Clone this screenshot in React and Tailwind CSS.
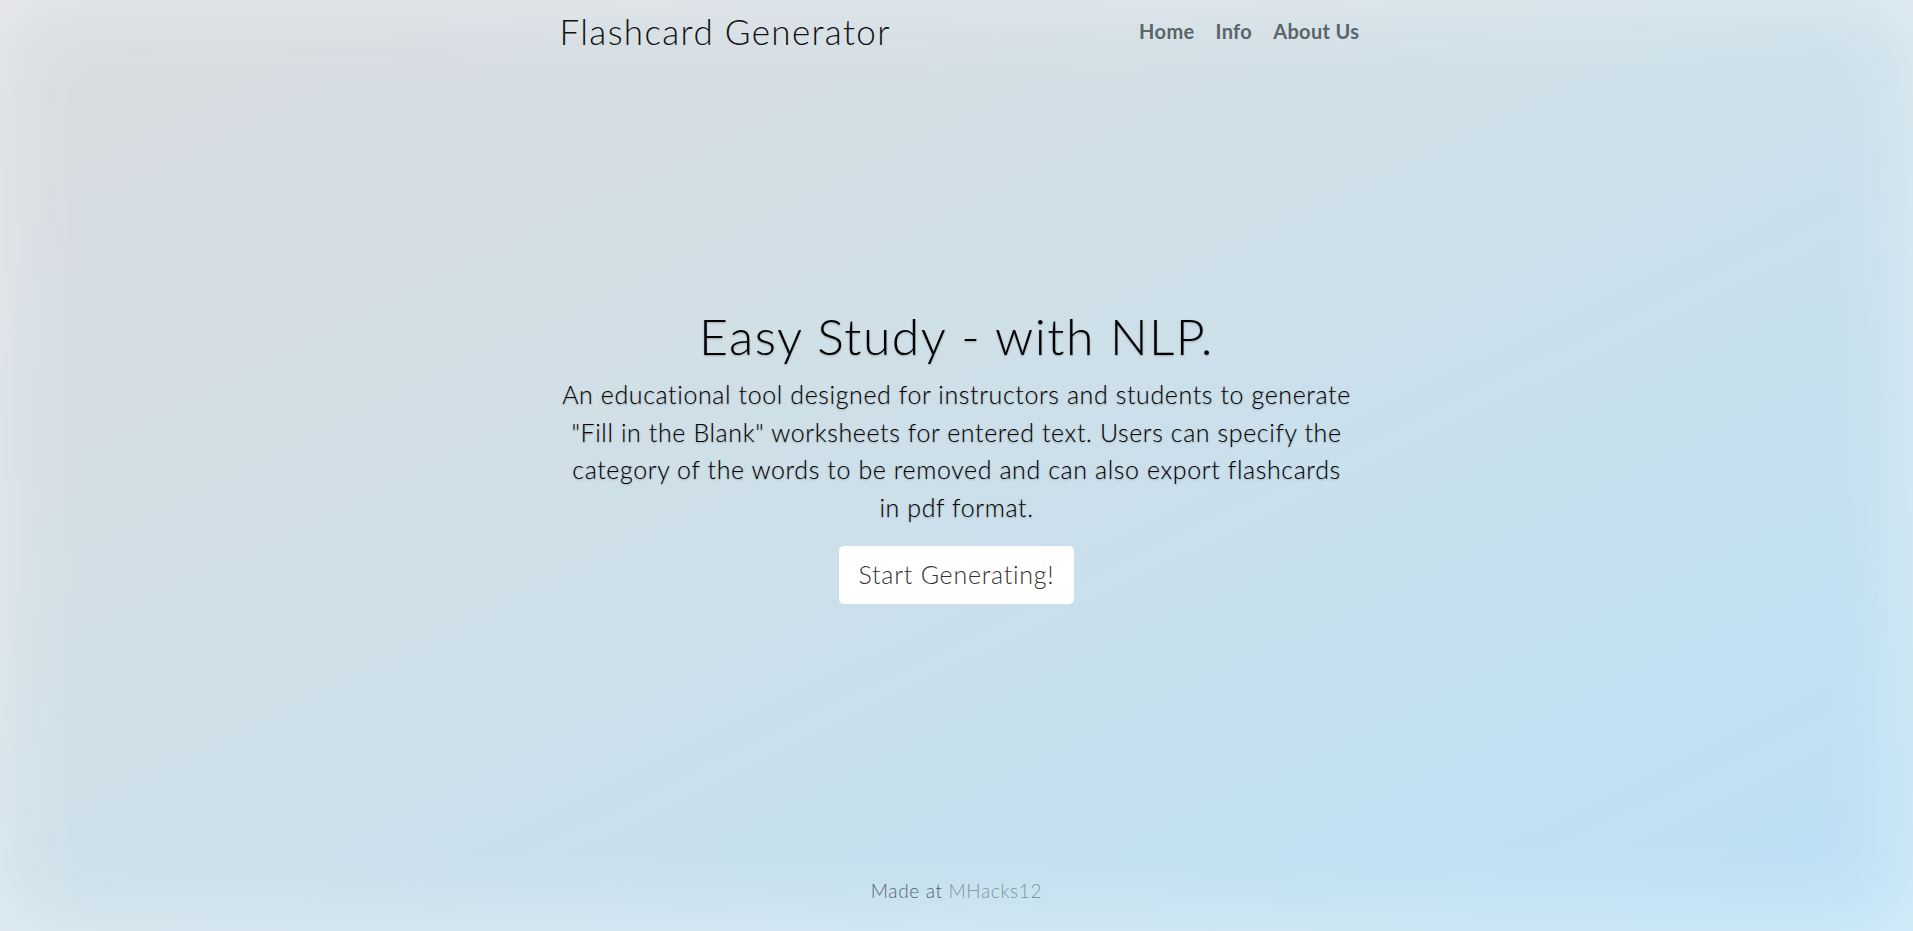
import React from 'react';

const App = () => {
  return (
    <div
      className="relative h-[931px] w-full overflow-hidden bg-[linear-gradient(to_bottom_right,#d9dcdf_0%,#d2dfe6_35%,#c7e0ee_65%,#bce1f6_100%)] font-['Lato','Open_Sans',sans-serif] shadow-[inset_0_0_90px_rgba(255,255,255,0.45)]"
    >
      <div className="mx-auto flex h-full w-[800px] flex-col">
        {/* header */}
        <header className="flex items-start justify-between pt-[10px]">
          <h3 className="ml-[3px] text-[35px] font-light leading-[1.2] tracking-[1.35px] text-[#111]">
            Flashcard Generator
          </h3>
          <nav className="-mr-[3px] flex gap-[21px] pt-[6px] text-[20px] font-bold leading-[1.5] tracking-[0.35px] text-[#5b6468]">
            <a href="#">Home</a>
            <a href="#">Info</a>
            <a href="#">About Us</a>
          </nav>
        </header>

        {/* hero */}
        <main className="mt-[254px] flex flex-col items-center text-center text-black [text-shadow:0_1px_2px_rgba(0,0,0,0.25)]">
          <h1 className="text-[50px] font-light leading-[1.2] tracking-[1.45px]">Easy Study - with NLP.</h1>
          <p className="mt-[10px] text-[25px] font-light leading-[1.5] tracking-[0.6px]">
            An educational tool designed for instructors and students to generate "Fill in the Blank" worksheets for entered text. Users can specify the category of the words to be removed and can also export flashcards in&nbsp;pdf format.
          </p>
          <button className="mt-[20px] h-[58px] rounded-[5px] bg-white px-[20px] text-[25px] font-light leading-[1.5] tracking-[0.75px] text-[#333] [text-shadow:none]">
            Start Generating!
          </button>
        </main>

        {/* footer */}
        <footer className="mt-auto pb-[26px] text-center text-[19px] font-light leading-[1.5] tracking-[0.65px] text-[#56626a]">
          Made at <a href="#" className="text-[#8493a0]">MHacks12</a>
        </footer>
      </div>
    </div>
  );
};

export default App;
